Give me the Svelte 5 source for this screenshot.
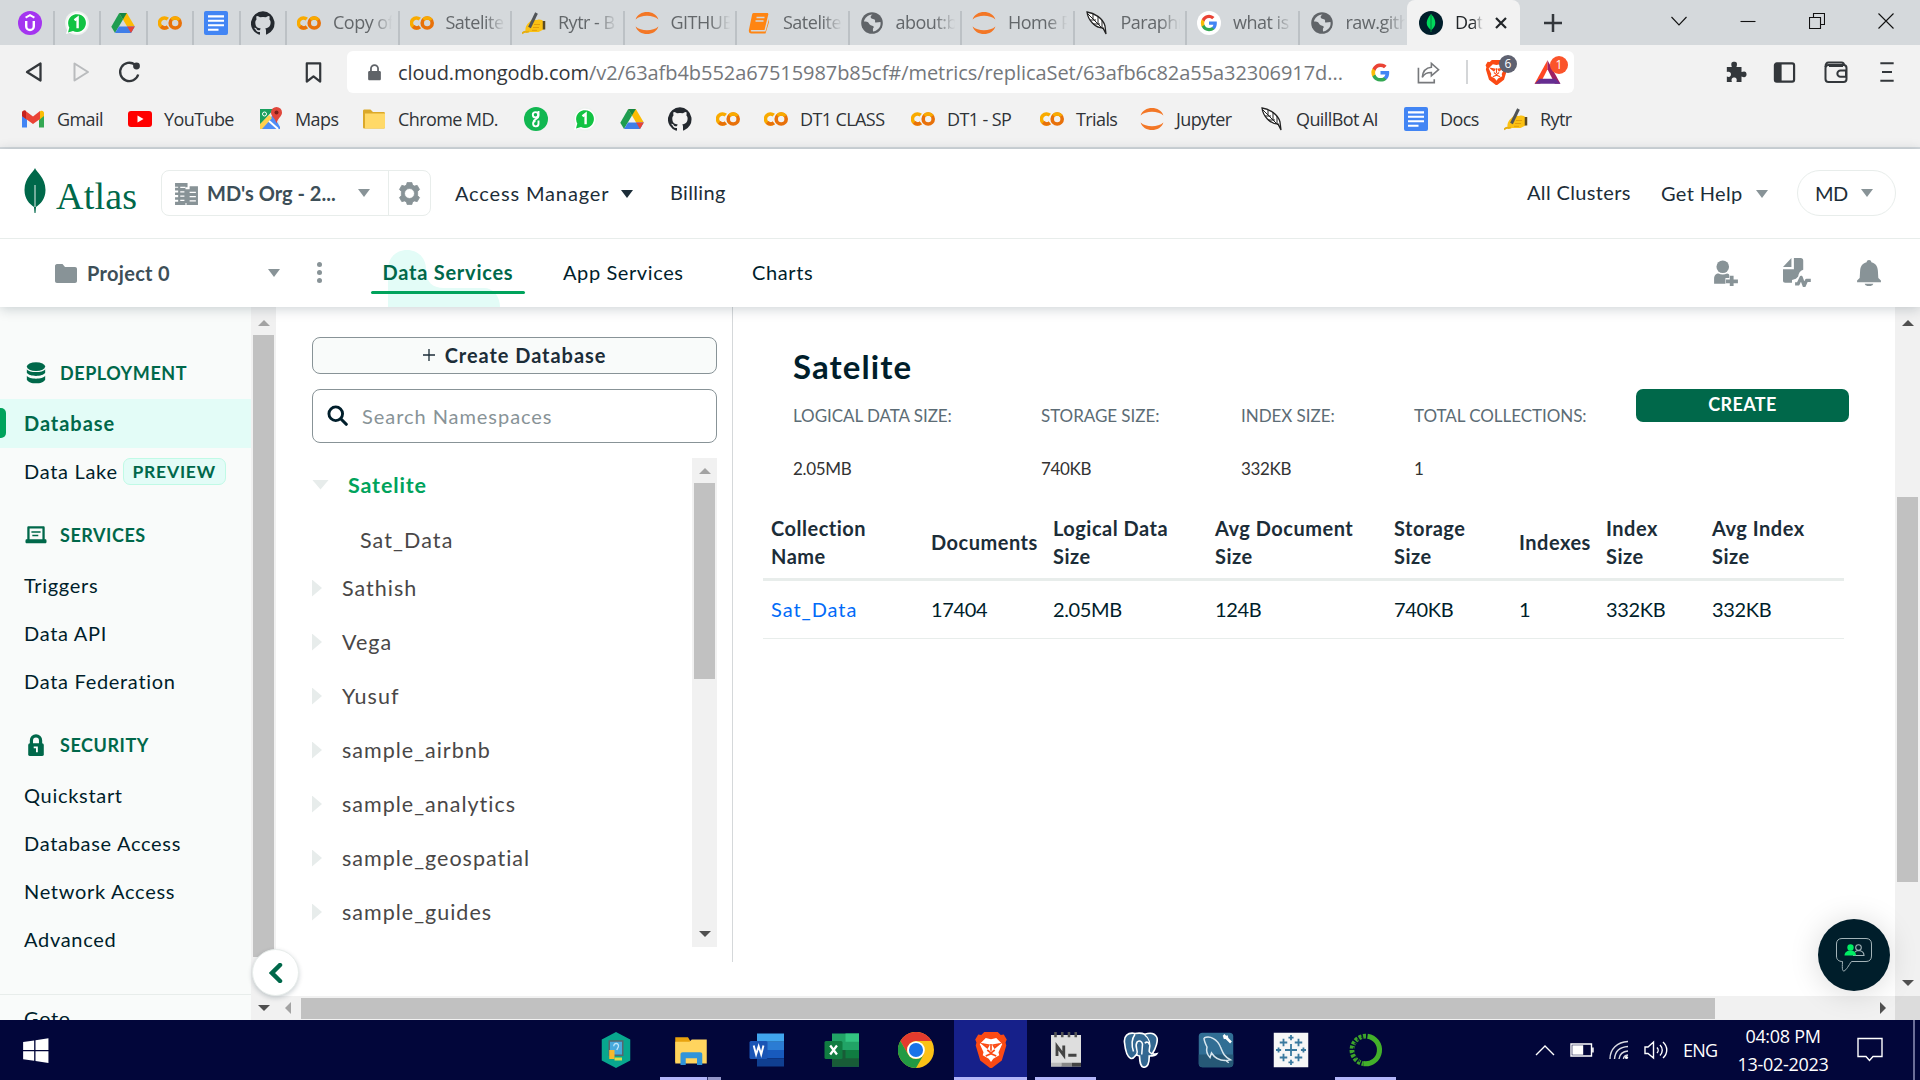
<script lang="ts">
  const icons: Record<string, string> = {
    udemy: '<circle cx="12" cy="12" r="12" fill="#a435f0"/><path d="M8.2 10v5.2a3.8 3.8 0 0 0 7.6 0V10" fill="none" stroke="#fff" stroke-width="2.4"/><path d="M7.6 6.6 12 4.2l4.4 2.4" fill="none" stroke="#fff" stroke-width="2"/>',
    whats: '<circle cx="12" cy="12" r="12" fill="#eef2ef"/><path d="M1 23l1.8-6.2A10.4 10.4 0 1 1 7 21.2z" fill="#fff"/><path d="M3 21.5l1.3-5A8.9 8.9 0 1 1 8 20z" fill="#12c343"/><path d="M9.5 9.3 12.6 7v10.2" fill="none" stroke="#fff" stroke-width="2.4"/>',
    drive: '<path d="M8.2 2h7.6l8 13.6h-7.7z" fill="#fbbc04"/><path d="M8.2 2 .3 15.7 4 22 12 8.6z" fill="#1e9d50"/><path d="M4 22h16l3.8-6.4H8z" fill="#3f7ee8"/><path d="m20 22 3.8-6.4h-7.7z" fill="#ea4335"/><path d="m8.2 2 3.8 6.6L15.8 2z" fill="#158543"/>',
    colab: '<circle cx="17.2" cy="12" r="5" fill="none" stroke="#e8710a" stroke-width="3.6"/><path d="M13.5 8.6A5 5 0 0 1 21.2 9" fill="none" stroke="#f9ab00" stroke-width="3.6"/><path d="M9.8 8.2a5 5 0 1 0 0 7.6" fill="none" stroke="#f9ab00" stroke-width="3.6"/><path d="M3.2 15.4a5 5 0 0 0 6.6.4" fill="none" stroke="#e8710a" stroke-width="3.6"/>',
    docs: '<rect width="24" height="24" rx="2" fill="#4285f4"/><path d="M4 5.4h16M4 9.8h16M4 14.2h16M4 18.8h10.5" stroke="#fff" stroke-width="2.1"/>',
    github: '<path fill="#24292f" d="M12 .3a12 12 0 0 0-3.8 23.4c.6.1.8-.3.8-.6v-2.2c-3.3.7-4-1.6-4-1.6-.6-1.4-1.4-1.8-1.4-1.8-1-.7.1-.7.1-.7 1.2 0 1.9 1.2 1.9 1.2 1 1.8 2.8 1.3 3.5 1 0-.8.4-1.3.7-1.6-2.7-.3-5.5-1.3-5.5-6 0-1.2.5-2.3 1.3-3.1-.2-.4-.6-1.6 0-3.2 0 0 1-.3 3.4 1.2a11.5 11.5 0 0 1 6 0c2.3-1.5 3.3-1.2 3.3-1.2.6 1.6.2 2.8 0 3.2.9.8 1.3 1.9 1.3 3.2 0 4.6-2.8 5.6-5.5 5.9.5.4.9 1.1.9 2.2v3.3c0 .3.1.7.8.6A12 12 0 0 0 12 .3"/>',
    rytr: '<path d="M4 22c-1-3-1-7 3-10.500l3-3 5 .5c3-1 5.500 0 6.500 1.500v8l-5 2.500H8z" fill="#fbc113"/><path d="M12 13.500h6M11 16.500h6M10 19.300h5" stroke="#e39e0a" stroke-width="1"/><path d="m7.500 16.500 7-14.500" stroke="#505458" stroke-width="3"/><path d="M22 10v8.500" stroke="#5b4a22" stroke-width="2.500"/><path d="M0 22.500c3-3 4-1 7-2" fill="none" stroke="#e5ae12" stroke-width="1.800"/>',
    jupyter: '<path d="M.6 8.600C3.500-1.500 20.500-1.500 23.400 8.600 18 3.600 6 3.600.6 8.600zM.6 15.400c2.900 10.100 19.900 10.100 22.800 0-5.400 5-17.400 5-22.800 0z" fill="#f37726"/>',
    book: '<path d="M6.500 2h13.500c1 0 1.500.8 1.300 1.600L17.500 19H4.500c-1 0-1 1.500 0 1.500H18.500L22 8v3l-3.500 11.500H4.500C2 22.500 1.500 20.500 2 18.500L5 4c.2-1.200.7-2 1.500-2z" fill="#ff8512"/><path d="M9.500 6.500h8M8.500 10h8" stroke="#d5d9dc" stroke-width="1.500"/>',
    globe: '<circle cx="12" cy="12" r="10.800" fill="#606468"/><path d="M12.5 3.500c-2 1-2.500 3-1 4l3 1c1.500 1-.5 3 1.500 3l4.500-.5c1 6-4 9-7.500 9.500 0-2-.5-3 1-4.500-1-2-4-1-5-3.500-1-2-3-2-5-2 .5-3 3.500-7 8.500-7z" fill="#d5d9dc"/>',
    quill: '<path d="M2 1c7 1 16 6 18 14l1 8-3-6C10 17 3 9 2 1z" fill="#fff" stroke="#222" stroke-width="1.300"/><path d="M3 3l16 16M5 9h6M8 13h7M8 3v5M13 5v8M17 9v7" stroke="#222" stroke-width="1" fill="none"/>',
    google: '<path fill="#4285f4" d="M23 12.300c0-.8-.1-1.600-.2-2.300H12v4.500h6.200a5.300 5.300 0 0 1-2.300 3.500v2.900h3.700c2.200-2 3.400-5 3.400-8.600z"/><path fill="#34a853" d="M12 23.500c3.100 0 5.700-1 7.600-2.800L15.900 18c-1 .7-2.300 1.100-3.900 1.100-3 0-5.500-2-6.400-4.700H1.800v3A11.500 11.500 0 0 0 12 23.500z"/><path fill="#fbbc05" d="M5.600 14.300a6.900 6.900 0 0 1 0-4.500v-3H1.800a11.500 11.500 0 0 0 0 10.400z"/><path fill="#ea4335" d="M12 5a6.200 6.200 0 0 1 4.400 1.700l3.300-3.300A11.500 11.500 0 0 0 1.800 6.800l3.800 3A6.900 6.900 0 0 1 12 5z"/>',
    googlew: '<circle cx="12" cy="12" r="12" fill="#fff"/><g transform="translate(3.500 3.500) scale(.71)"><path fill="#4285f4" d="M23 12.300c0-.8-.1-1.600-.2-2.300H12v4.500h6.200a5.300 5.300 0 0 1-2.300 3.500v2.900h3.700c2.200-2 3.400-5 3.400-8.600z"/><path fill="#34a853" d="M12 23.500c3.100 0 5.700-1 7.600-2.800L15.900 18c-1 .7-2.300 1.100-3.900 1.100-3 0-5.500-2-6.400-4.700H1.800v3A11.500 11.500 0 0 0 12 23.500z"/><path fill="#fbbc05" d="M5.600 14.300a6.900 6.900 0 0 1 0-4.500v-3H1.800a11.500 11.500 0 0 0 0 10.400z"/><path fill="#ea4335" d="M12 5a6.200 6.200 0 0 1 4.400 1.700l3.300-3.300A11.500 11.500 0 0 0 1.800 6.800l3.800 3A6.900 6.900 0 0 1 12 5z"/></g>',
    mongo: '<circle cx="12" cy="12" r="12" fill="#001e2b"/><path d="M12 3c3 3 4.300 6 4.300 9s-2 5.500-4 7c-2.500-1.500-4.600-4-4.600-7S9.500 6 12 3z" fill="#00d95c"/><path d="M12 4v17" stroke="#00863d" stroke-width="1"/>',
    gmail: '<path d="M1 20.500V5.500l5 4v11z" fill="#4285f4"/><path d="M18 20.500v-11l5-4v15z" fill="#34a853"/><path d="M18 5.500 19.500 4C21.500 3 23 4.500 23 6v3l-5 4z" fill="#fbbc04"/><path d="M1 9V6c0-2 2-3 3.600-2L12 9.500 19 4v8L12 17 5 12z" fill="#ea4335"/><path d="M1 9V6c0-2 2-3 4-2v8z" fill="#c5221f"/>',
    youtube: '<rect y="4" width="24" height="16" rx="3" fill="#f00"/><path d="m9.500 8.500 6 3.500-6 3.500z" fill="#fff"/>',
    maps: '<rect x="1" y="2" width="19" height="20" rx="2" fill="#e8eaed"/><path d="M1 2h14L1 18z" fill="#18a05e"/><path d="M1 22 14 8l7 12v2z" fill="#4d8df6"/><path d="m1 17 9-9 3 3L3 22H1z" fill="#ffd04c"/><path d="m10 14 9 8" stroke="#fff" stroke-width="2"/><path d="M17.500 0a5.500 5.500 0 0 1 5.500 5.500c0 4-4 5-5.500 11-1.500-6-5.500-7-5.500-11A5.500 5.500 0 0 1 17.500 0z" fill="#e0473b"/><circle cx="17.500" cy="5.500" r="2" fill="#7c1f17"/><circle cx="5.500" cy="7" r="2" fill="none" stroke="#fff" stroke-width="1"/>',
    folder: '<path d="M1 4c0-1 .6-1.500 1.500-1.500h6L11 5h10.500c1 0 1.500.5 1.500 1.500V20c0 1-.6 1.500-1.500 1.500h-19C1.500 21.500 1 21 1 20z" fill="#dba92b"/><path d="M3 6.500h20V20c0 1-.6 1.500-1.500 1.500H3z" fill="#ffd968"/>',
    gfg: '<circle cx="12" cy="12" r="12" fill="#11b751"/><circle cx="11.500" cy="7.800" r="2.700" fill="none" stroke="#fff" stroke-width="1.900"/><path d="M14.500 4v5c0 3-5 3-5 6m5-1.500v3a2.700 2.700 0 1 1-3-2.500" fill="none" stroke="#fff" stroke-width="1.900"/>',
    back: '<path d="M18.500 3.500v17L5 12z" fill="none" stroke="#33373b" stroke-width="2.300" stroke-linejoin="round"/>',
    forward: '<path d="M5.500 3.500v17L19 12z" fill="none" stroke="#b9bbbd" stroke-width="2" stroke-linejoin="round"/>',
    reload: '<path d="M20.200 14.500A9.200 9.200 0 1 1 17 4.700" fill="none" stroke="#33373b" stroke-width="2.300"/><circle cx="18.500" cy="6" r="3.400" fill="#33373b"/>',
    bookmark: '<path d="M5 2.500h14v19l-7-5.500-7 5.500z" fill="none" stroke="#33373b" stroke-width="2.300" stroke-linejoin="round"/>',
    lock: '<path d="M5 10h14c1.200 0 2 .8 2 2v9c0 1.200-.8 2-2 2H5c-1.200 0-2-.8-2-2v-9c0-1.200.8-2 2-2z" fill="#5f6368"/><path d="M7 11V6.500a5 5 0 0 1 10 0V11" fill="none" stroke="#5f6368" stroke-width="2.500"/>',
    share: '<path d="M1.500 7v15.500H18V19" fill="none" stroke="#77797c" stroke-width="1.700"/><path d="M15 2.500 22.500 9 15 15.500V12c-5 0-8 2-9.500 5C6 11 9 7 15 6.500z" fill="none" stroke="#77797c" stroke-width="1.600"/>',
    brave: '<path d="M7.500 0h9l2 2 2-.3L22.500 5l-.8 2 .5 2-3 10L12 24.500 4.800 19 1.800 9l.5-2-.8-2L3.500 1.700l2 .3z" fill="#fb4a14"/><path d="m8.500 4 3.500.8 3.500-.8 4 4-2.500 5.500.5 2-4 2.300L12 20l-1.500-2.200-4-2.300.5-2L4.500 8z" fill="#fff"/><path d="m6.500 8 4 .7-1 1.800zM17.500 8l-4 .7 1 1.800zM12 8v4.500M9.500 12 12 14l2.500-2M8.500 16l3.500-1.500 3.500 1.500" fill="none" stroke="#fb4a14" stroke-width="1.100"/>',
    bat: '<path d="M12 1 .5 22h5L12 9z" fill="#ff4724"/><path d="M12 1v8l6.500 13h5z" fill="#9e1f63"/><path d="M.5 22h23l-4.500-4.500H5z" fill="#662d91"/>',
    puzzle: '<path d="M2 6.500h5.500C6 2 7.500.7 10 .7s4 1.300 2.500 5.800H18v5.500c4-1.500 5.500 0 5.500 2.500S22 18.500 18 17v6h-5.500c1-4-.5-5-2.500-5s-3.500 1-2.500 5H2v-6c3.500 1 4.500-.5 4.500-2.500S5 11 2 12z" fill="#33373b"/>',
    panel: '<rect x="2" y="2.500" width="20" height="19" rx="2" fill="none" stroke="#33373b" stroke-width="2.300"/><path d="M2 3h7v18H2z" fill="#33373b"/>',
    wallet: '<rect x="1.500" y="5" width="21" height="17" rx="3" fill="none" stroke="#33373b" stroke-width="2"/><path d="M1.500 7c0-3 1-4.500 3-4.500h13c1.800 0 2.500 1 2.500 2.500M5 6h14" fill="none" stroke="#33373b" stroke-width="2"/><path d="M22 10.500h-5.500a3 3 0 0 0 0 6.300H22z" fill="#f2f2f2" stroke="#33373b" stroke-width="2"/>',
    menu: '<path d="M4 1.500h16M6 12h12M4 22.500h16" stroke="#33373b" stroke-width="2.400"/>',
    building: '<path d="M1 2h12v4h-2v2h4V5h8v18H12v-2h-1v2H1v-3h3v-2H1v-2.500h3v-2H1V11h3V9H1V6.500h3v-1H1z" fill="#889397"/><path d="M6 6h5M6 10.500h4M6 14.500h4M6 18.500h4M15 11h6M15 15h6M15 19h6" stroke="#fff" stroke-width="1.200"/>',
    gear: '<path fill-rule="evenodd" d="m9.500.5-.7 2.700-2 1L4 3.500 1.500 7.800l2 2v4.400l-2 2L4 20.500l2.800-.7 2 1 .7 2.700h5l.7-2.700 2-1 2.800.7 2.500-4.300-2-2V9.800l2-2L20 3.500l-2.800.7-2-1-.7-2.700zM12 6.800a5.200 5.200 0 1 0 0 10.400 5.200 5.200 0 0 0 0-10.400z" fill="#889397" stroke="#889397" stroke-width=".8" stroke-linejoin="round"/>',
    pfolder: '<path d="M1 5c0-1 .8-2 2-2h5.500l2.500 3h10c1.200 0 2 .8 2 2v12c0 1.200-.8 2-2 2H3c-1.200 0-2-.8-2-2z" fill="#889397"/>',
    userplus: '<g fill="#889397"><circle cx="9" cy="6.200" r="5.800"/><path d="M1 22v-4.500C1 14 3 12.500 5 12.500c2.500 1.300 5.500 1.300 8 0 1 .2 2 .5 2 1.500v2.500h-3.500V22z"/><path d="M15.500 14.500h3.500v3.500h4v3.500h-4v4h-3.500v-4H12V18h3.500z"/></g>',
    activity: '<path d="M7.500 0v8H0zM9.700 0h6c1.500 0 2.300.8 2.300 2.300v8.200c-3 1-4 3-4.500 6l-2 2-3.500 1v2.500H2C.7 22 0 21.200 0 20V10h9.700z" fill="#889397" transform="scale(.93)"/><path d="M10 21.500h2.500L15 16l2.500 7 2-4.500H23" fill="none" stroke="#889397" stroke-width="2.700" stroke-linejoin="round"/>',
    bell: '<path d="M12 0c1.300 0 2 .8 2.200 2 4 1 5.800 3.800 6 8l.4 6.500L23 19v1.500H1V19l2.400-2.500.4-6.500c.2-4.200 2-7 6-8C10 .8 10.700 0 12 0zM8 22h8c-.5 1.500-2 2.200-4 2.200S8.500 23.500 8 22z" fill="#889397"/>',
    db: '<g fill="#00684a"><ellipse cx="12" cy="5" rx="10" ry="4.700"/><path d="M2 7.800c2.500 4.300 17.500 4.300 20 0v4c-2.500 4.500-17.500 4.500-20 0z"/><path d="M2 15c2.500 4.200 17.500 4.200 20 0v4.300c-2.500 5.300-17.500 5.300-20 0z"/></g>',
    laptop: '<path fill-rule="evenodd" d="M4 2.500h16c1 0 1.500.5 1.500 1.500v12.500h1.500c1 2 .5 4.500-.5 4.500H1.500C.5 21 0 18.500 1 16.500h1.500V4c0-1 .5-1.500 1.500-1.500zM5 5v11.500h14V5z" fill="#00684a"/><path d="M7 8.700h10M8 12.500h6.500" stroke="#00684a" stroke-width="1.700"/>',
    padlock: '<rect x="3.500" y="10" width="17" height="14" rx="2" fill="#00684a"/><path d="M7 11V7a5 5 0 0 1 10 0v4" fill="none" stroke="#00684a" stroke-width="3.500"/><path d="M9.500 14.500H13v5.500" fill="none" stroke="#fff" stroke-width="2"/>',
    search: '<circle cx="10" cy="10" r="7.800" fill="none" stroke="#001e2b" stroke-width="3.300"/><path d="m16 16 6 6" stroke="#001e2b" stroke-width="3.600" stroke-linecap="round"/>',
    windows: '<path d="M1 4.500 10.800 3v8.500H1zM12 2.800 23.500 1v10.500H12zM1 12.700h9.800v8.500L1 19.800zM12 12.700h11.500V23L12 21.400z" fill="#fff"/>',
    shield: '<path d="M12 0 21.500 5v14L12 24 2.500 19V5z" fill="#08a78e"/><rect x="7.500" y="6" width="9" height="9.500" fill="#48a9dc" stroke="#58666e" stroke-width="1"/><path d="M11 18h5" stroke="#d6e04c" stroke-width="2"/><rect x="7.500" y="12" width="3.500" height="6" fill="#f7b92c"/><path d="M10.500 9.500c0-3 4-2 3 .5l-1 2" fill="none" stroke="#bfe4f8" stroke-width=".9"/>',
    explorer: '<path d="M1.500 3.500h8.500L11.500 6H22V20H1.500z" fill="#e8a20e"/><path d="M1.500 6.500H11l1.500-1.500H22.500V21H1.500z" fill="#ffd45e"/><path d="M5 22v-7c0-1 .6-1.500 1.500-1.500h11.500c1 0 1.500.5 1.500 1.500v7H16v-4.500H8.500V22z" fill="#2f94da"/>',
    word: '<path d="M6 1h18v5.500H6z" fill="#41a5ee"/><path d="M6 6.500h18V12H6z" fill="#2b7cd3"/><path d="M6 12h18v5.500H6z" fill="#185abd"/><path d="M6 17.500h18V23H6z" fill="#103f91"/><rect x="1" y="6" width="12" height="12" rx="1" fill="#1a55b5"/><path d="m3.800 9 1.600 6 1.700-5.500L8.800 15l1.500-6" fill="none" stroke="#fff" stroke-width="1.300"/>',
    excel: '<path d="M6 1h18v22H6z" fill="#21a366"/><path d="M15 1h9v5.500h-9z" fill="#33c481"/><path d="M6 12h18v11H6z" fill="#185c37"/><path d="M15 12h9v5.500h-9z" fill="#107c41"/><rect x="1" y="6" width="12" height="12" rx="1" fill="#107c41"/><path d="m4.800 9 4.500 6m0-6-4.500 6" stroke="#fff" stroke-width="1.500"/>',
    chrome: '<circle cx="12" cy="12" r="12" fill="#fbc116"/><path d="M1.600 6A12 12 0 0 1 22.400 6H12a6 6 0 0 0-5.400 8.600z" fill="#e33b2e"/><path d="M1.600 6A12 12 0 0 0 12 24l5.200-9A6 6 0 0 1 6.800 15z" fill="#229a43"/><circle cx="12" cy="12" r="5.900" fill="#fff"/><circle cx="12" cy="12" r="4.700" fill="#1a73e8"/>',
    notepad: '<path d="M2 2h20v21H2z" fill="#dedede"/><path d="M2 20.500h7V23H2z" fill="#bbb"/><path d="M9 20.500h7V23H9z" fill="#888"/><path d="M16 20.500h6V23h-6z" fill="#444"/><path d="M5 0v3.500M9.500 0v3.500M14 0v3.500M18.500 0v3.500" stroke="#555" stroke-width="1.700"/><path d="M6 16V9.500l4.500 6V9M13.500 15.500H19" fill="none" stroke="#444" stroke-width="1.900"/>',
    postgres: '<path d="M8 1C3 0 .5 3 1 7c.5 5 2 9.500 4 10.500 2 1 3-1.500 4-2.500 1 1 1 1 2 1 .2 4 .5 7.500 3 7.500s3.500-2 3.500-7.500c2 0 4 0 5-1.500-2 .5-2.500 0-3 0 2.500-3.500 4-9 3-11-1.500-3-5-3-8-2-2-1-4-1-6.500-.5z" fill="#336791" stroke="#fff" stroke-width="1.100"/><path d="M8 1.500C5.500 5 6 10 7 13m7.500-11c3 2 4 6 3 10-.5 2 1 2 2 2.500M9 15.500c2-4-2-5 .5-9 1.500-1 3-.5 3.500 1.500l-.5 7M14.500 7.500c1.500-1.500 3-.5 3 1" fill="none" stroke="#fff" stroke-width="1"/>',
    mysql: '<rect x="0.500" y="0.500" width="23" height="23" rx="2.500" fill="#316e94"/><path d="M.5 15h23v6a2.500 2.500 0 0 1-2.500 2.500H3A2.500 2.500 0 0 1 .5 21z" fill="#265876"/><path d="M4 4c4-2 9 1 11 6 1.500 3.500 2 6 6.500 8.500l-3 .5 2 1.500M4 4c0 2 1 4 2 6-1 4 1 6 2 7l1-3c2 3 5 5 9 5" fill="none" stroke="#d8e6ee" stroke-width="1"/><path d="m17 2 5 5M17 4l3-1" stroke="#fff" stroke-width="1.700"/>',
    tableau: '<rect x="0.500" y="0.500" width="23" height="23" fill="#f6f6f6"/><path d="M12 8v8M8 12h8M12 2v3.500M10.300 3.700h3.400M12 18.500V22M10.300 20.300h3.400M2 12h3.400M3.700 10.300v3.400M18.600 12H22M20.300 10.300v3.400M7 4.500v5M4.500 7h5M17 4.500v5M14.500 7h5M7 14.500v5M4.500 17h5M17 14.500v5M14.500 17h5" stroke="#39799f" stroke-width="1.200"/>',
    anaconda: '<path d="M13 2.800a9.200 9.200 0 1 1-2.500 18.300" fill="none" stroke="#43b02a" stroke-width="3.400"/><path d="M12 2.800a9.200 9.200 0 0 0-1.500 18.300" fill="none" stroke="#3da32a" stroke-width="3.200" stroke-dasharray="2 .9"/><path d="M10 3.300a9.200 9.200 0 0 0-1 17" fill="none" stroke="#0a2a2f" stroke-width="1" stroke-dasharray="1.200 2"/>',
  };

  const pinned = ['udemy', 'whats', 'drive', 'colab', 'docs', 'github'];
  const tabs = [
    ['colab', 'Copy of'], ['colab', 'Satelite'], ['rytr', 'Rytr - B'], ['jupyter', 'GITHUB'],
    ['book', 'Satelite'], ['globe', 'about:b'], ['jupyter', 'Home P'], ['quill', 'Paraphr'],
    ['googlew', 'what is'], ['globe', 'raw.gith'],
  ];
  const bookmarks = [
    ['gmail', 'Gmail'], ['youtube', 'YouTube'], ['maps', 'Maps'], ['folder', 'Chrome MD.'], ['gfg', ''],
    ['whats', ''], ['drive', ''], ['github', ''], ['colab', ''], ['colab', 'DT1 CLASS'], ['colab', 'DT1 - SP'],
    ['colab', 'Trials'], ['jupyter', 'Jupyter'], ['quill', 'QuillBot AI'], ['docs', 'Docs'], ['rytr', 'Rytr'],
  ];
  const groups = [
    { icon: 'db', title: 'DEPLOYMENT', items: ['Database', 'Data Lake'] },
    { icon: 'laptop', title: 'SERVICES', items: ['Triggers', 'Data API', 'Data Federation'] },
    { icon: 'padlock', title: 'SECURITY', items: ['Quickstart', 'Database Access', 'Network Access', 'Advanced'] },
  ];
  const namespaces = ['Sathish', 'Vega', 'Yusuf', 'sample_airbnb', 'sample_analytics', 'sample_geospatial', 'sample_guides'];
  const stats = [
    ['LOGICAL DATA SIZE:', '2.05MB'], ['STORAGE SIZE:', '740KB'], ['INDEX SIZE:', '332KB'], ['TOTAL COLLECTIONS:', '1'],
  ];
  const columns = [
    ['Collection', 'Name'], ['Documents'], ['Logical Data', 'Size'], ['Avg Document', 'Size'],
    ['Storage', 'Size'], ['Indexes'], ['Index', 'Size'], ['Avg Index', 'Size'],
  ];
  const row = ['Sat_Data', '17404', '2.05MB', '124B', '740KB', '1', '332KB', '332KB'];
  const apps = [
    ['shield', ''], ['explorer', 'open multi'], ['word', ''], ['excel', ''], ['chrome', ''], ['brave', 'open current'],
    ['notepad', 'open'], ['postgres', ''], ['mysql', ''], ['tableau', ''], ['anaconda', 'open'],
  ];
</script>

{#snippet icon(name: string, size = 24)}
  <svg class="icon" viewBox="0 0 24 24" width={size} height={size}>{@html icons[name]}</svg>
{/snippet}

<div class="screen">
  <div class="tabbar">
    {#each pinned as name}
      <div class="pin">{@render icon(name)}</div>
    {/each}
    {#each tabs as [name, label], i}
      <div class="tab" class:last={i === tabs.length - 1}>{@render icon(name)}<span class="fade">{label}</span></div>
    {/each}
    <div class="tab active">
      {@render icon('mongo')}<span class="fade">Dat</span>
      <svg class="x" viewBox="0 0 12 12" width="12" height="12"><path d="M1 1l10 10M11 1 1 11" stroke="#222629" stroke-width="2.200" /></svg>
    </div>
    <svg class="plus" viewBox="0 0 18 18" width="18" height="18"><path d="M9 0v18M0 9h18" stroke="#33373b" stroke-width="2.500" /></svg>
    <div class="window">
      <svg viewBox="0 0 16 16" width="16" height="16"><path d="M.5 4 8 12l7.500-8" /></svg>
      <svg viewBox="0 0 16 16" width="16" height="16"><path d="M.5 8.500h15" /></svg>
      <svg viewBox="0 0 16 16" width="16" height="16"><path d="M.5 4.500h11v11H.5zM4.500 4V.5h11v11H12" /></svg>
      <svg viewBox="0 0 16 16" width="16" height="16"><path d="m.5.5 15 15m0-15-15 15" /></svg>
    </div>
  </div>

  <div class="toolbar">
    <div class="nav">
      {@render icon('back')}{@render icon('forward')}{@render icon('reload')}{@render icon('bookmark', 23)}
    </div>
    <div class="url">
      {@render icon('lock', 17)}
      <span class="address">cloud.mongodb.com<em>/v2/63afb4b552a67515987b85cf#/metrics/replicaSet/63afb6c82a55a32306917d...</em></span>
      {@render icon('google', 19)}
      {@render icon('share', 23)}
      <i class="sep"></i>
      <div class="badged">{@render icon('brave', 25)}<b>6</b></div>
      <div class="badged red">{@render icon('bat', 27)}<b>1</b></div>
    </div>
    <div class="tools">
      {@render icon('puzzle', 22)}{@render icon('panel', 23)}{@render icon('wallet', 24)}{@render icon('menu', 20)}
    </div>
  </div>

  <div class="bookmarks">
    {#each bookmarks as [name, label]}
      <div class="mark">{@render icon(name)}{#if label}<span>{label}</span>{/if}</div>
    {/each}
  </div>

  <header>
    <div class="top">
      <svg class="leaf" viewBox="0 0 22 46" width="22" height="46"><path d="M11 0c1 4 10.500 9 10.500 22 0 9-5 14-9.500 17l-.5 6h-1L10 39C5.500 36 .5 31 .5 22 .5 9 10 4 11 0z" fill="#00684a" /><path d="M11 17v22" stroke="#fff" stroke-width=".9" /></svg>
      <span class="brand">Atlas</span>
      <div class="org">
        <div class="orgname">{@render icon('building', 25)}<b>MD's Org - 2...</b><i class="caret gray"></i></div>
        <div class="orggear">{@render icon('gear', 23)}</div>
      </div>
      <span class="access">Access Manager</span><i class="caret dark"></i>
      <span class="billing">Billing</span>
      <span class="clusters">All Clusters</span>
      <span class="help">Get Help</span><i class="caret gray"></i>
      <div class="user">MD<i class="caret gray"></i></div>
    </div>
    <div class="sub">
      <div class="project">{@render icon('pfolder', 24)}<b>Project 0</b><i class="caret gray"></i></div>
      <div class="dots"><i></i><i></i><i></i></div>
      <div class="service current">
        <svg class="blob" viewBox="0 0 112 57" width="112" height="57"><path d="M0 57V19C0 8 8 0 19 0s19 8 19 19c0 13 6 19 18 19h40c9 0 16 8 16 19z" fill="#e3fcf7" /></svg>
        <span>Data Services</span>
      </div>
      <div class="service app">App Services</div>
      <div class="service">Charts</div>
      <div class="actions">{@render icon('userplus', 26)}{@render icon('activity', 29)}{@render icon('bell', 26)}</div>
    </div>
  </header>

  <div class="page">
    <aside>
      {#each groups as group}
        <h4>{@render icon(group.icon, 22)}{group.title}</h4>
        {#each group.items as item}
          <div class="item" class:selected={item === 'Database'}>
            {item}{#if item === 'Data Lake'}<span class="preview">PREVIEW</span>{/if}
          </div>
        {/each}
      {/each}
      <div class="goto">Goto</div>
    </aside>
    <div class="vbar side"><i class="up"></i><div class="thumb"></div><i class="down"></i>
      <div class="collapse"><svg viewBox="0 0 14 20" width="14" height="20"><path d="m11 2-8 8 8 8" fill="none" stroke="#00684a" stroke-width="4.500" stroke-linecap="round" /></svg></div>
    </div>
    <div class="body">
      <main>
        <section class="browser">
          <div class="create"><svg viewBox="0 0 12 12" width="12" height="12"><path d="M6 0v12M0 6h12" stroke="#1c2d38" stroke-width="1.300" /></svg>Create Database</div>
          <div class="search">{@render icon('search', 21)}Search Namespaces</div>
          <div class="listbox">
            <div class="list">
              <div class="open-db"><i></i>Satelite</div>
              <div class="collection">Sat_Data</div>
              {#each namespaces as name}
                <div class="ns"><i></i>{name}</div>
              {/each}
            </div>
            <div class="vbar inner"><i class="up"></i><div class="thumb"></div><i class="down"></i></div>
          </div>
        </section>
        <section class="detail">
          <h1>Satelite</h1>
          <div class="stats">
            {#each stats as [label, value]}
              <div class="stat"><span>{label}</span><p>{value}</p></div>
            {/each}
            <div class="createbtn">CREATE</div>
          </div>
          <div class="table head">
            {#each columns as lines}<div>{#each lines as line}<span>{line}</span>{/each}</div>{/each}
          </div>
          <div class="table row">
            {#each row as cell, i}<div class:link={i === 0}>{cell}</div>{/each}
          </div>
        </section>
      </main>
      <div class="hbar"><i class="left"></i><div class="thumb"></div><i class="right"></i></div>
    </div>
    <div class="vbar outer"><i class="up"></i><div class="thumb"></div><i class="down"></i><div class="corner"></div></div>
    <div class="chat">
      <svg viewBox="0 0 38 36" width="38" height="36"><path d="M7 1.500h24c3.500 0 5.500 2 5.500 5.500v12c0 3.500-2 5.500-5.500 5.500H16.500c-3 4-5 8.500-7.500 9.500-1.500 0-2-1-1.500-9.500C3.500 24.500 1.500 22.500 1.500 19V7c0-3.500 2-5.500 5.500-5.500z" fill="none" stroke="#a3b3b8" stroke-width="1" /><path d="M18.500 18.500c0-3 1.500-4 4-5 4 0 6.500 2 6.500 5z" fill="none" stroke="#a3b3b8" stroke-width="1.100" /><circle cx="23.500" cy="10.500" r="2.800" fill="none" stroke="#a3b3b8" stroke-width="1.100" /><circle cx="15.500" cy="10.500" r="3.200" fill="#00ed64" /><path d="M9.500 18.500c0-3 2.500-5 6-5s5.500 2 5.500 5z" fill="#00ed64" /></svg>
    </div>
  </div>

  <footer>
    <div class="start">{@render icon('windows', 27)}</div>
    {#each apps as [name, state]}
      <div class="appicon {state}">{@render icon(name, 36)}</div>
    {/each}
    <div class="tray">
      <svg viewBox="0 0 20 12" width="20" height="12"><path d="m1 11 9-9 9 9" /></svg>
      <svg viewBox="0 0 24 14" width="24" height="14"><path d="M1 1h20.500v12H1zM23 4.500v5" /><path d="M3 3h9.500v8H3z" fill="#fff" /></svg>
      <svg viewBox="0 0 20 20" width="20" height="20"><path d="M1 19C1 9 8 2 19 1.500M5.500 19C6 11.500 11 7 19 6.500M10 19c.5-4.500 3.500-7.500 9-8M14.500 19c0-2 1.500-3.500 4.500-4" opacity=".85" /><circle cx="17.500" cy="17.500" r="1.600" fill="#fff" stroke="none" /></svg>
      <svg viewBox="0 0 24 20" width="24" height="20"><path d="M1 7v6.500h3L9.500 18V2L4 7zM13 7.500c1.500 1.500 1.500 4 0 5.500M16 5c3 3 3 7.500 0 10.500M19 2c5 4.500 5 11.500 0 16" /></svg>
      <span class="lang">ENG</span>
      <div class="clock"><span>04:08 PM</span><span>13-02-2023</span></div>
      <svg viewBox="0 0 26 26" width="26" height="26"><path d="M1 1.500h24v18H16L12.500 23.500 9 19.500H1z" /></svg>
      <i class="peek"></i>
    </div>
  </footer>
</div>

<style>
  :global(body) { margin: 0; overflow: hidden; }
  .screen { width: 1920px; height: 1080px; display: flex; flex-direction: column; overflow: hidden; background: #fff; font-family: Lato, "Open Sans", sans-serif; color: #1c2d38; }
  .screen * { box-sizing: border-box; }
  .icon { flex: none; display: block; }
  i { display: block; flex: none; }

  .tabbar, .toolbar, .bookmarks, footer { font-family: "Open Sans", "Noto Sans", sans-serif; }
  .tabbar { flex: none; height: 45px; background: #d5d9dc; display: flex; align-items: center; padding-left: 7px; }
  .pin { width: 46.500px; height: 45px; display: flex; align-items: center; justify-content: center; position: relative; }
  .pin::after, .tab::after { content: ''; position: absolute; right: -1px; top: 11px; bottom: 0; width: 2px; background: #bcc1c5; }
  .tab { width: 112.500px; height: 45px; padding-left: 11px; display: flex; align-items: center; position: relative; color: #63676a; font-size: 18px; letter-spacing: -.5px; }
  .fade { margin-left: 12px; width: 62px; overflow: hidden; white-space: nowrap; padding-bottom: 1px; -webkit-mask-image: linear-gradient(90deg, #000 62%, transparent); mask-image: linear-gradient(90deg, #000 62%, transparent 96%); }
  .tab.active { background: #f2f2f2; border-radius: 8px 8px 0 0; color: #222629; margin-left: -4px; width: 113px; padding-left: 12px; }
  .tab.active::after, .tab.last::after { display: none; }
  .tab.active .fade { width: 29px; }
  .x { margin-left: 11px; }
  .plus { margin-left: 24px; }
  .window { margin-left: auto; padding-right: 26px; display: flex; gap: 53px; padding-bottom: 3px; }
  .window svg { fill: none; stroke: #111; stroke-width: 1.100; }

  .toolbar { flex: none; height: 57px; background: #f2f2f2; display: flex; align-items: center; padding: 0 23px 3px 22px; }
  .nav { display: grid; grid-template-columns: 47px 49px 184px 45px; align-items: center; }
  .url { width: 1227px; height: 42px; background: #fff; border-radius: 6px; padding-left: 19px; display: flex; align-items: center; position: relative; }
  .address { margin-left: 15px; width: 973px; flex: none; white-space: nowrap; font-size: 20px; letter-spacing: -.06px; color: #33373b; }
  .address em { font-style: normal; color: #74777b; }
  .url > .icon:nth-of-type(3) { margin-left: 27px; }
  .sep { width: 2px; height: 24px; background: #d4d6d8; margin: 0 16px 0 26px; }
  .badged { position: relative; flex: none; width: 25px; margin-right: 25px; }
  .badged b { position: absolute; left: 15px; top: -5px; width: 18px; height: 18px; border-radius: 9px; background: #5e6170; color: #fff; font-size: 12px; line-height: 18px; text-align: center; font-weight: 400; }
  .badged.red b { background: #fb542b; left: 16px; top: -3px; }
  .tools { margin-left: auto; display: flex; gap: 28px; align-items: center; }
  .tools .icon:first-child { margin-right: -2px; }
  .tools .icon:last-child { margin-left: 1px; }

  .bookmarks { flex: none; height: 47px; background: #f2f2f2; border-bottom: 2px solid #d3d8dc; padding: 0 0 11px 21px; display: grid; grid-template-columns: 107px 131px 103px 162px 49px 47px 48px 48px 48px 147px 129px 100px 120px 144px 100px 90px; align-items: center; color: #2f3337; font-size: 18px; }
  .mark { display: flex; align-items: center; gap: 12px; white-space: nowrap; letter-spacing: -.6px; }

  header { flex: none; height: 158px; background: #fff; position: relative; z-index: 2; box-shadow: 0 2px 12px rgba(0, 30, 43, .2); font-size: 20px; }
  .top { height: 90px; border-bottom: 1px solid #e8edeb; display: flex; align-items: center; padding: 0 24px 0 24px; }
  .leaf { margin-top: -6px; }
  .brand { font: 38px/40px "Liberation Serif", serif; color: #00684a; margin-left: 10px; width: 105px; padding-top: 4px; letter-spacing: .2px; }
  .org { width: 270px; height: 46px; margin-top: -1px; border: 1px solid #e8edeb; border-radius: 8px; display: flex; }
  .orgname { width: 227px; border-right: 1px solid #e8edeb; display: flex; align-items: center; padding-left: 12px; color: #3d4f58; }
  .orgname b { margin-left: 8px; width: 151px; white-space: nowrap; }
  .orggear { flex: 1; display: flex; align-items: center; justify-content: center; }
  .caret { width: 0; height: 0; border: 6px solid transparent; border-top: 8px solid #889397; border-bottom: 0; }
  .caret.dark { border-top-color: #1c2d38; }
  .access { margin-left: 24px; width: 166px; letter-spacing: .85px; white-space: nowrap; padding-bottom: 2px; }
  .billing { margin-left: 37px; }
  .billing, .clusters, .help { letter-spacing: .35px; white-space: nowrap; padding-bottom: 3px; }
  .clusters { margin-left: auto; width: 134px; }
  .help { width: 95px; padding-bottom: 1px; }
  .user { width: 99px; height: 46px; margin-top: -1px; border: 1px solid #e8edeb; border-radius: 23px; margin-left: 29px; display: flex; align-items: center; justify-content: space-between; padding: 0 22px 0 17px; letter-spacing: -.5px; }

  .sub { height: 67px; display: flex; align-items: center; padding-left: 54px; }
  .project { width: 226px; display: flex; align-items: center; color: #3d4f58; }
  .project b { margin-left: 9px; width: 181px; letter-spacing: .3px; }
  .dots { width: 7px; margin-left: 37px; display: grid; gap: 3px; }
  .dots i { width: 5px; height: 5px; border-radius: 50%; background: #889397; }
  .service { letter-spacing: .6px; height: 68px; line-height: 67px; position: relative; white-space: nowrap; color: #001e2b; }
  .service.current { margin-left: 47px; width: 154px; text-align: center; font-weight: 700; color: #00684a; letter-spacing: .75px; }
  .service.current::after { content: ''; position: absolute; left: 0; bottom: 13px; width: 154px; height: 3px; background: #00a35c; border-radius: 2px; }
  .service.current span { position: relative; }
  .blob { position: absolute; left: 17px; bottom: 0; }
  .service.app { margin-left: 38px; width: 189px; }
  .actions { margin-left: auto; padding-right: 38px; display: flex; align-items: center; gap: 44px; }

  .page { height: 713px; display: flex; position: relative; }
  aside { width: 251px; height: 713px; overflow: hidden; background: #f9fbfa; padding-top: 27px; font-size: 20px; letter-spacing: .7px; color: #001e2b; }
  h4 { margin: 0; height: 66px; padding: 11px 0 0 25px; display: flex; align-items: center; gap: 13px; font-size: 18px; letter-spacing: .55px; color: #00684a; }
  .item { height: 48px; padding: 0 0 2px 24px; display: flex; align-items: center; position: relative; white-space: nowrap; }
  .item.selected { margin-top: -1px; height: 49px; padding-bottom: 1px; background: #e3fcf7; font-weight: 700; color: #00684a; letter-spacing: .95px; }
  .item.selected::before { content: ''; position: absolute; left: 0; top: 9px; width: 6px; height: 30px; border-radius: 0 5px 5px 0; background: #00a35c; }
  .preview { margin-left: 5px; width: 103px; height: 27px; line-height: 25px; text-align: center; border: 1px solid #c0fae6; background: #e3fcf7; border-radius: 7px; font-weight: 700; font-size: 17.500px; letter-spacing: .8px; color: #00684a; }
  .goto { margin-top: 30px; border-top: 1px solid #e8edeb; padding: 11px 0 0 24px; }

  .vbar { background: #f1f1f1; width: 25px; display: flex; flex-direction: column; align-items: center; position: relative; flex: none; }
  .vbar .thumb { width: 21px; background: #c1c1c1; }
  .up, .down, .left, .right { width: 0; height: 0; border: 6px solid transparent; }
  .up { border-bottom-color: #505050; border-top: 0; }
  .down { border-top-color: #505050; border-bottom: 0; }
  .left { border-right-color: #a3a3a3; border-left: 0; }
  .right { border-left-color: #505050; border-right: 0; }
  .side .up, .inner .up { border-bottom-color: #a3a3a3; }
  .side .up { margin: 13px 0 9px; }
  .side .thumb { height: 622px; }
  .side .down { margin-top: 48px; }
  .collapse { position: absolute; left: 1px; top: 642px; width: 47px; height: 47px; background: #fff; border: 1px solid #e8edeb; border-radius: 50%; box-shadow: 0 2px 5px rgba(0, 30, 43, .2); display: grid; place-items: center; z-index: 1; }

  .body { width: 1619px; flex: none; }
  main { height: 689px; display: flex; }
  .browser { width: 457px; height: 655px; border-right: 1px solid #d5d8da; padding: 30px 15px 0 36px; }
  .create { height: 37px; padding-bottom: 2px; border: 1px solid #889397; border-radius: 8px; background: #f9fbfa; display: flex; align-items: center; justify-content: center; gap: 10px; font-weight: 700; font-size: 20px; letter-spacing: .95px; }
  .search { margin-top: 15px; height: 54px; padding-bottom: 1px; border: 1px solid #889397; border-radius: 8px; display: flex; align-items: center; padding-left: 14px; gap: 14px; color: #889397; font-size: 20px; letter-spacing: .95px; }
  .listbox { margin-top: 15px; height: 489px; display: flex; }
  .list { flex: 1; font-size: 21.500px; letter-spacing: 1px; color: #494747; }
  .open-db { height: 54px; padding-bottom: 1px; display: flex; align-items: center; color: #00a35c; font-weight: 700; gap: 19px; letter-spacing: .85px; }
  .open-db i { width: 17px; height: 10px; background: #e7eceb; clip-path: polygon(0 0, 100% 0, 50% 100%); }
  .collection { height: 57px; line-height: 56px; padding-left: 48px; letter-spacing: 1.100px; }
  .ns { height: 54px; display: flex; align-items: center; gap: 20px; }
  .collection + .ns { margin-top: -8px; }
  .ns i { width: 10px; height: 17px; background: #e7eceb; clip-path: polygon(0 0, 100% 50%, 0 100%); }
  .inner .up { margin: 10px 0 9px; }
  .inner .thumb { height: 196px; }
  .inner .down { margin-top: auto; margin-bottom: 10px; }

  .detail { width: 1162px; padding: 37px 0 0 30px; }
  h1 { margin: 0 0 0 30px; font-size: 33px; line-height: 44px; height: 45px; letter-spacing: 1.100px; color: #001e2b; }
  .stats { display: grid; grid-template-columns: 248px 200px 173px 222px 213px; padding-left: 30px; height: 118px; font-size: 17px; letter-spacing: -.05px; white-space: nowrap; }
  .stat { padding-top: 16px; color: #5c6c75; line-height: 22px; }
  .stat p { margin: 31px 0 0; color: #333; letter-spacing: -.35px; }
  .createbtn { height: 33px; background: #00684a; color: #fff; border-radius: 7px; font-weight: 700; font-size: 18px; line-height: 31px; text-align: center; letter-spacing: .4px; }
  .table { width: 1081px; padding-left: 8px; display: grid; grid-template-columns: 160px 122px 162px 179px 125px 87px 106px 132px; align-items: center; font-size: 20px; line-height: 28px; white-space: nowrap; }
  .head { height: 74px; padding-bottom: 1px; border-bottom: 3px solid #e8edeb; font-weight: 700; letter-spacing: .5px; }
  .head span { display: block; }
  .row { height: 58px; padding-bottom: 1px; border-bottom: 1px solid #e8edeb; color: #001e2b; letter-spacing: -.35px; }
  .link { color: #016bf8; letter-spacing: .95px; }

  .hbar { height: 24px; background: #f1f1f1; display: flex; align-items: center; padding: 0 9px; }
  .hbar .thumb { width: 1414px; height: 21px; background: #c1c1c1; margin-left: 10px; }
  .hbar .right { margin-left: auto; }
  .outer .up { margin-top: 13px; }
  .outer .thumb { margin-top: 171px; height: 385px; }
  .outer .down { margin-top: 98px; }
  .corner { margin-top: auto; width: 25px; height: 24px; background: #dcdcdc; }
  .chat { position: absolute; left: 1818px; top: 612px; width: 72px; height: 72px; border-radius: 50%; background: #001e2b; display: grid; place-items: center; box-shadow: 0 2px 30px rgba(0, 0, 0, .15); z-index: 2; }

  footer { flex: none; height: 60px; background: #02063a; display: flex; align-items: center; color: #fff; position: relative; z-index: 3; }
  .start { width: 579px; padding-left: 22px; }
  .appicon { width: 73px; margin-right: 2px; height: 60px; display: grid; place-items: center; position: relative; }
  .open::after { content: ''; position: absolute; left: 6px; right: 6px; bottom: 0; height: 3px; background: #b3b5f8; }
  .multi::after { background: linear-gradient(90deg, #b3b5f8 47px, #30346d 47px, #30346d 48px, #9496c8 48px); }
  .current.appicon { background: #16208a; }
  .current.appicon::after { left: 0; right: 0; }
  .tray { margin-left: auto; display: flex; align-items: center; }
  .tray svg { fill: none; stroke: #fff; stroke-width: 1.400; margin-right: 15px; }
  .lang { font-size: 18px; letter-spacing: -.8px; width: 54px; }
  .clock { width: 92px; display: flex; flex-direction: column; text-align: center; font-size: 18px; line-height: 28px; letter-spacing: -.3px; margin: 0 28px 0 0; white-space: nowrap; }
  .tray svg:nth-of-type(5) { margin-right: 30px; }
  .peek { width: 2px; height: 60px; background: #6b6e98; margin-right: 5px; }
</style>
